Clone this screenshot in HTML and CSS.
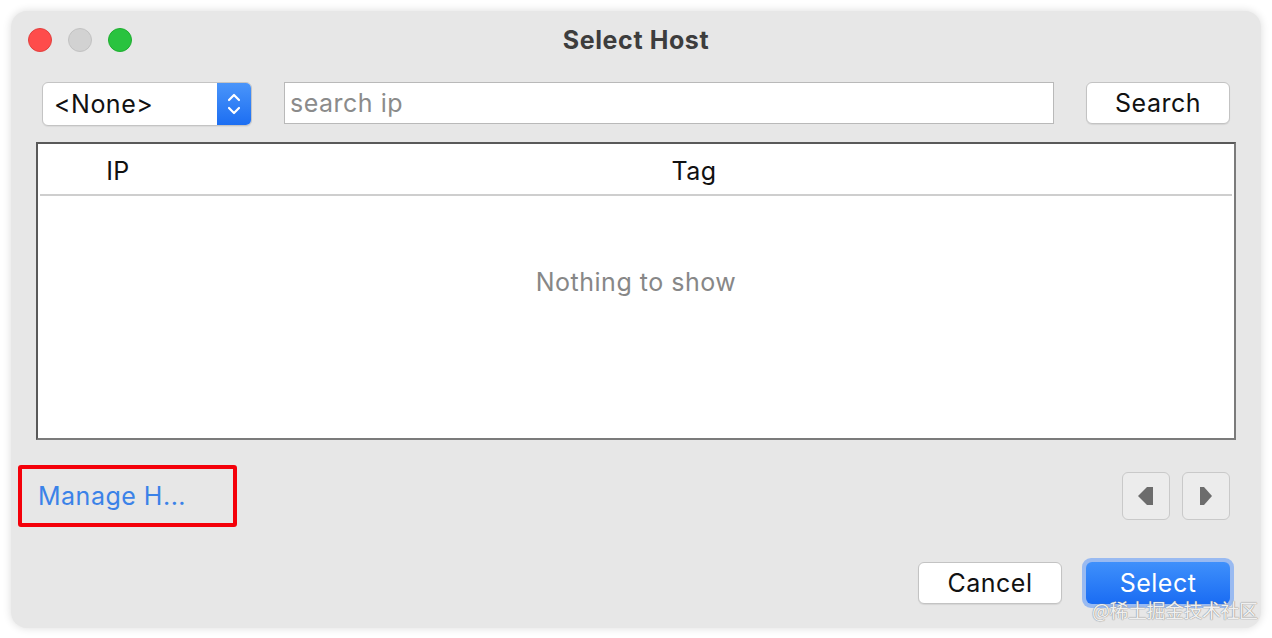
FILE: index.html
```html
<!DOCTYPE html>
<html>
<head>
<meta charset="utf-8">
<link rel="stylesheet" href="styles.css">
</head>
<body>
<div class="window">
  <div class="titlebar">
    <div class="lights">
      <span class="light red"></span>
      <span class="light gray"></span>
      <span class="light green"></span>
    </div>
    <div class="title">Select Host</div>
  </div>
  <div class="toolbar">
    <div class="popup">
      <span class="popup-label">&lt;None&gt;</span>
      <span class="popup-arrows">
        <svg width="16" height="26" viewBox="0 0 16 26"><path d="M3 9 L8 4 L13 9" fill="none" stroke="#fff" stroke-width="2.2" stroke-linecap="round" stroke-linejoin="round"/><path d="M3 17 L8 22 L13 17" fill="none" stroke="#fff" stroke-width="2.2" stroke-linecap="round" stroke-linejoin="round"/></svg>
      </span>
    </div>
    <div class="search"><span class="placeholder">search ip</span></div>
    <button class="btn">Search</button>
  </div>
  <div class="table">
    <div class="thead">
      <div class="col-ip">IP</div>
      <div class="col-tag">Tag</div>
    </div>
    <div class="tbody">Nothing to show</div>
  </div>
  <div class="navrow">
    <span class="link">Manage H...</span>
    <div class="pager">
      <button class="pbtn"><svg width="16" height="18" viewBox="0 0 16 18"><path d="M0 9 L9 0 L15 0 L15 18 L9 18 Z" fill="#6c6c6c"/></svg></button>
      <button class="pbtn"><svg width="13" height="18" viewBox="0 0 13 18"><path d="M0 0 L4 0 L12 9 L4 18 L0 18 Z" fill="#6c6c6c"/></svg></button>
    </div>
  </div>
  <div class="footer">
    <button class="btn">Cancel</button>
    <div class="focus-ring"><button class="btn primary">Select</button></div>
  </div>
  <div class="annot"></div>
</div>
<div class="watermark">@稀土掘金技术社区</div>
</body>
</html>
```
FILE: styles.css
```css
html, body {
  margin: 0;
  padding: 0;
  background: #ffffff;
  font-family: Inter, "Noto Sans", "Noto Sans CJK SC", sans-serif;
}
body {
  width: 1272px;
  height: 638px;
  overflow: hidden;
  position: relative;
}
.window {
  position: relative;
  margin: 11px 0 0 11px;
  width: 1250px;
  height: 617px;
  box-sizing: border-box;
  border-radius: 16px;
  background: #e7e7e7;
  box-shadow: 0 0 9px rgba(0, 0, 0, 0.14);
  font-size: 25px;
  letter-spacing: 0.5px;
}
.titlebar {
  position: relative;
  height: 58px;
  display: flex;
  align-items: center;
  justify-content: center;
}
.lights {
  position: absolute;
  left: 17px;
  top: 17px;
  display: flex;
  gap: 16px;
}
.light {
  width: 24px;
  height: 24px;
  border-radius: 50%;
  box-sizing: border-box;
}
.light.red { background: #fe4c4b; border: 1px solid #e2403e; }
.light.gray { background: #d2d2d2; border: 1px solid #c2c2c2; }
.light.green { background: #29c33f; border: 1px solid #1eae2f; }
.title {
  font-size: 25px;
  font-weight: 700;
  color: #3d3d3d;
  letter-spacing: 0.6px;
}
.toolbar {
  display: flex;
  align-items: flex-start;
  padding: 13px 31px 0 31px;
  gap: 32px;
}
.popup {
  width: 210px;
  height: 44px;
  display: flex;
  box-sizing: border-box;
  border-radius: 6px;
  background: #fff;
  border: 1px solid #c4c4c4;
  overflow: hidden;
  box-shadow: 0 1px 1px rgba(0,0,0,0.06);
}
.popup-label {
  flex: 1;
  display: flex;
  align-items: center;
  padding-left: 11px;
  color: #111;
}
.popup-arrows {
  width: 34px;
  display: flex;
  align-items: center;
  justify-content: center;
  background: linear-gradient(#4a95fa, #1c6ef2);
}
.search {
  flex: 1;
  height: 42px;
  box-sizing: border-box;
  background: #fff;
  border: 1px solid #b9b9b9;
  display: flex;
  align-items: center;
  padding-left: 5px;
}
.placeholder {
  color: #8b8b8b;
}
.btn {
  height: 42px;
  width: 144px;
  box-sizing: border-box;
  border-radius: 6px;
  background: #fff;
  border: 1px solid #c3c3c3;
  box-shadow: 0 1px 1px rgba(0,0,0,0.08);
  font-family: inherit;
  font-size: 25px;
  letter-spacing: 0.5px;
  color: #111;
  padding: 0;
}
.table {
  margin: 16px 25px 0 25px;
  height: 298px;
  box-sizing: border-box;
  background: #fff;
  border-top: 2px solid #595959;
  border-left: 2px solid #595959;
  border-right: 2px solid #7b7b7b;
  border-bottom: 2px solid #7b7b7b;
  padding: 2px 2px 0 2px;
}
.thead {
  display: grid;
  grid-template-columns: 156px 996px 1fr;
  height: 50px;
  box-sizing: border-box;
  padding-top: 2px;
  align-items: center;
  border-bottom: 2px solid #cecece;
  color: #111;
}
.col-ip, .col-tag { text-align: center; }
.tbody {
  text-align: center;
  padding-top: 71px;
  color: #878787;
}
.navrow {
  display: flex;
  align-items: center;
  justify-content: space-between;
  margin-top: 32px;
  padding: 0 31px 0 27px;
  height: 48px;
}
.link {
  color: #3b82e8;
}
.pager {
  display: flex;
  gap: 12px;
}
.pbtn {
  width: 48px;
  height: 48px;
  box-sizing: border-box;
  border-radius: 6px;
  background: #ececec;
  border: 1px solid #c9c9c9;
  display: flex;
  align-items: center;
  justify-content: center;
  padding: 0;
}
.footer {
  display: flex;
  justify-content: flex-end;
  align-items: center;
  gap: 20px;
  margin-top: 38px;
  padding-right: 27px;
}
.focus-ring {
  padding: 4px;
  border-radius: 9px;
  background: rgba(90, 150, 250, 0.55);
}
.btn.primary {
  width: 144px;
  display: block;
  border: none;
  color: #fff;
  background: linear-gradient(#3f90fb, #1a6cf3);
  box-shadow: none;
}
.annot {
  position: absolute;
  left: 7px;
  top: 454px;
  width: 219px;
  height: 62px;
  box-sizing: border-box;
  border: 4px solid #f4000a;
  border-radius: 3px;
}
.watermark {
  position: absolute;
  left: 1092px;
  top: 596px;
  font-size: 19px;
  color: rgba(255,255,255,0.9);
  text-shadow: 0 0 1px #888, 0 0 1px #888;
  font-family: "Noto Sans CJK SC", sans-serif;
  letter-spacing: -0.5px;
}
```
